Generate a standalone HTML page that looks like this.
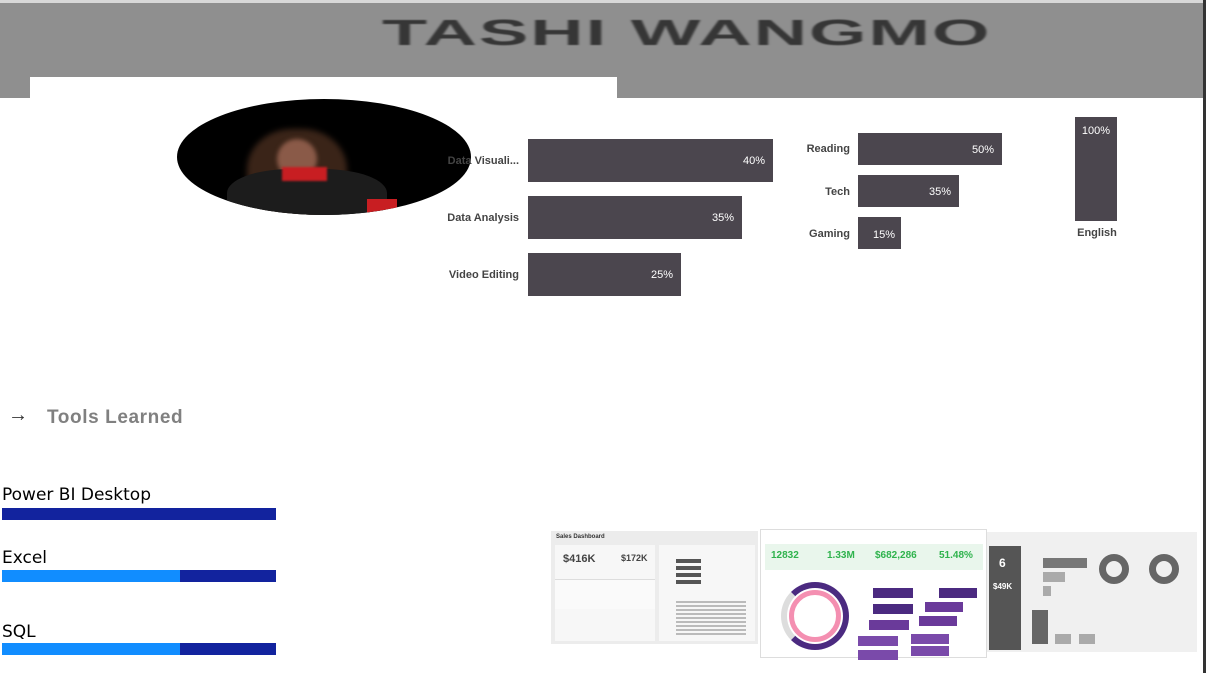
<!DOCTYPE html>
<html><head><meta charset="utf-8"><style>
*{margin:0;padding:0;box-sizing:border-box}
body{width:1206px;height:673px;position:relative;overflow:hidden;background:#fff;font-family:"Liberation Sans",sans-serif}
.a{position:absolute}
.bar{position:absolute;background:#4b464e;color:#fff;font-size:11px;text-align:right;padding-right:8px}
.lab{position:absolute;font-size:11px;font-weight:bold;color:#444;text-align:right}
.tl{position:absolute;left:2px;font-family:"Comic Sans MS","DejaVu Sans",sans-serif;font-size:17px;color:#000}
</style></head><body>
<div class="a" style="left:0;top:0;width:1206px;height:3px;background:#d8d8d8"></div>
<div class="a" style="left:0;top:3px;width:1203px;height:95px;background:#8f8f8f"></div>
<div class="a" style="left:382px;top:12px;font-size:36px;font-weight:bold;color:#363636;letter-spacing:1px;transform:scaleX(2.05);transform-origin:left top;white-space:nowrap;filter:blur(0.6px)">TASHI WANGMO</div>
<div class="a" style="left:30px;top:77px;width:587px;height:21px;background:#fff"></div>
<div class="a" style="left:1203px;top:0;width:3px;height:673px;background:#333"></div>
<div class="a" style="left:177px;top:99px;width:294px;height:116px;border-radius:50%;background:#000;overflow:hidden">
<div class="a" style="left:70px;top:30px;width:100px;height:90px;border-radius:45%;background:#3a2418;filter:blur(3px)"></div>
<div class="a" style="left:100px;top:40px;width:40px;height:40px;border-radius:50%;background:#8a5a48;filter:blur(2px)"></div>
<div class="a" style="left:50px;top:70px;width:160px;height:60px;border-radius:40%;background:#1c1c1c"></div>
<div class="a" style="left:105px;top:68px;width:45px;height:14px;background:#c81e22;filter:blur(1px)"></div>
<div class="a" style="left:190px;top:100px;width:30px;height:16px;background:#c81e22"></div>
</div>
<div class="lab" style="left:400px;top:155px;width:119px">Data Visuali...</div>
<div class="lab" style="left:400px;top:212px;width:119px">Data Analysis</div>
<div class="lab" style="left:400px;top:269px;width:119px">Video Editing</div>
<div class="bar" style="left:528px;top:139px;width:245px;height:43px;line-height:45px">40%</div>
<div class="bar" style="left:528px;top:196px;width:214px;height:43px;line-height:45px">35%</div>
<div class="bar" style="left:528px;top:253px;width:153px;height:43px;line-height:45px">25%</div>
<div class="lab" style="left:760px;top:143px;width:90px">Reading</div>
<div class="lab" style="left:760px;top:186px;width:90px">Tech</div>
<div class="lab" style="left:760px;top:228px;width:90px">Gaming</div>
<div class="bar" style="left:858px;top:133px;width:144px;height:32px;line-height:34px">50%</div>
<div class="bar" style="left:858px;top:175px;width:101px;height:32px;line-height:34px">35%</div>
<div class="bar" style="left:858px;top:217px;width:43px;height:32px;line-height:36px;padding-right:6px">15%</div>
<div class="bar" style="left:1075px;top:117px;width:42px;height:104px;text-align:center;padding:8px 0 0;line-height:13px">100%</div>
<div class="lab" style="left:1060px;top:227px;width:74px;text-align:center">English</div>
<div class="a" style="left:8px;top:404px;font-size:20px;color:#333">→</div>
<div class="a" style="left:47px;top:407px;font-size:19px;font-weight:900;color:#808080;letter-spacing:0.6px">Tools Learned</div>
<div class="tl" style="top:485px">Power BI Desktop</div>
<div class="a" style="left:2px;top:508px;width:274px;height:12px;background:#12239e"></div>
<div class="tl" style="top:548px">Excel</div>
<div class="a" style="left:2px;top:570px;width:274px;height:12px;background:#12239e"></div>
<div class="a" style="left:2px;top:570px;width:178px;height:12px;background:#118dff"></div>
<div class="tl" style="top:622px">SQL</div>
<div class="a" style="left:2px;top:643px;width:274px;height:12px;background:#12239e"></div>
<div class="a" style="left:2px;top:643px;width:178px;height:12px;background:#118dff"></div>
<div class="a" style="left:551px;top:531px;width:207px;height:113px;background:#ececec">
<div class="a" style="left:5px;top:3px;font-size:6px;font-weight:bold;color:#333">Sales Dashboard</div>
<div class="a" style="left:4px;top:14px;width:100px;height:96px;background:#f7f7f7"></div>
<div class="a" style="left:12px;top:22px;font-size:11px;font-weight:bold;color:#444">$416K</div>
<div class="a" style="left:70px;top:22px;font-size:9px;font-weight:bold;color:#444">$172K</div>
<div class="a" style="left:4px;top:48px;width:100px;height:30px;background:#fafafa;border-top:1px solid #ddd"></div>
<div class="a" style="left:108px;top:14px;width:96px;height:96px;background:#f7f7f7"></div>
<div class="a" style="left:125px;top:28px;width:25px;height:28px;background:repeating-linear-gradient(#555 0 4px,transparent 4px 7px)"></div>
<div class="a" style="left:125px;top:70px;width:70px;height:36px;background:repeating-linear-gradient(#bbb 0 2px,transparent 2px 4px)"></div>
</div>
<div class="a" style="left:760px;top:529px;width:227px;height:129px;background:#fff;border:1px solid #ddd">
<div class="a" style="left:4px;top:14px;width:218px;height:26px;background:#e9f6ec"></div>
<div class="a" style="left:10px;top:20px;font-size:10px;color:#2fb34d;font-weight:bold">12832</div>
<div class="a" style="left:66px;top:20px;font-size:10px;color:#2fb34d;font-weight:bold">1.33M</div>
<div class="a" style="left:114px;top:20px;font-size:10px;color:#2fb34d;font-weight:bold">$682,286</div>
<div class="a" style="left:178px;top:20px;font-size:10px;color:#2fb34d;font-weight:bold">51.48%</div>
<div class="a" style="left:20px;top:52px;width:68px;height:68px;border-radius:50%;border:6px solid #4b2a80;border-left-color:#ddd"></div>
<div class="a" style="left:28px;top:60px;width:52px;height:52px;border-radius:50%;border:5px solid #f48fb1"></div>
<div class="a" style="left:112px;top:58px;width:40px;height:10px;background:#4b2a80;box-shadow:0 16px #4b2a80,-4px 32px #6a3a9a,-15px 48px #7a4aaa,-15px 62px #7a4aaa"></div>
<div class="a" style="left:178px;top:58px;width:38px;height:10px;background:#4b2a80;box-shadow:-14px 14px #6a3a9a,-20px 28px #6a3a9a,-28px 46px #7a4aaa,-28px 58px #7a4aaa"></div>
</div>
<div class="a" style="left:987px;top:532px;width:210px;height:120px;background:#f0f0f0">
<div class="a" style="left:2px;top:14px;width:32px;height:104px;background:#555"></div>
<div class="a" style="left:12px;top:24px;font-size:12px;color:#fff;font-weight:bold">6</div>
<div class="a" style="left:6px;top:50px;font-size:8px;color:#fff;font-weight:bold">$49K</div>
<div class="a" style="left:56px;top:26px;width:44px;height:10px;background:#777"></div>
<div class="a" style="left:56px;top:40px;width:22px;height:10px;background:#aaa"></div>
<div class="a" style="left:56px;top:54px;width:8px;height:10px;background:#aaa"></div>
<div class="a" style="left:112px;top:22px;width:30px;height:30px;border-radius:50%;border:7px solid #666"></div>
<div class="a" style="left:162px;top:22px;width:30px;height:30px;border-radius:50%;border:7px solid #666"></div>
<div class="a" style="left:45px;top:78px;width:16px;height:34px;background:#666"></div>
<div class="a" style="left:68px;top:102px;width:16px;height:10px;background:#aaa"></div>
<div class="a" style="left:92px;top:102px;width:16px;height:10px;background:#aaa"></div>
</div>
</body></html>
